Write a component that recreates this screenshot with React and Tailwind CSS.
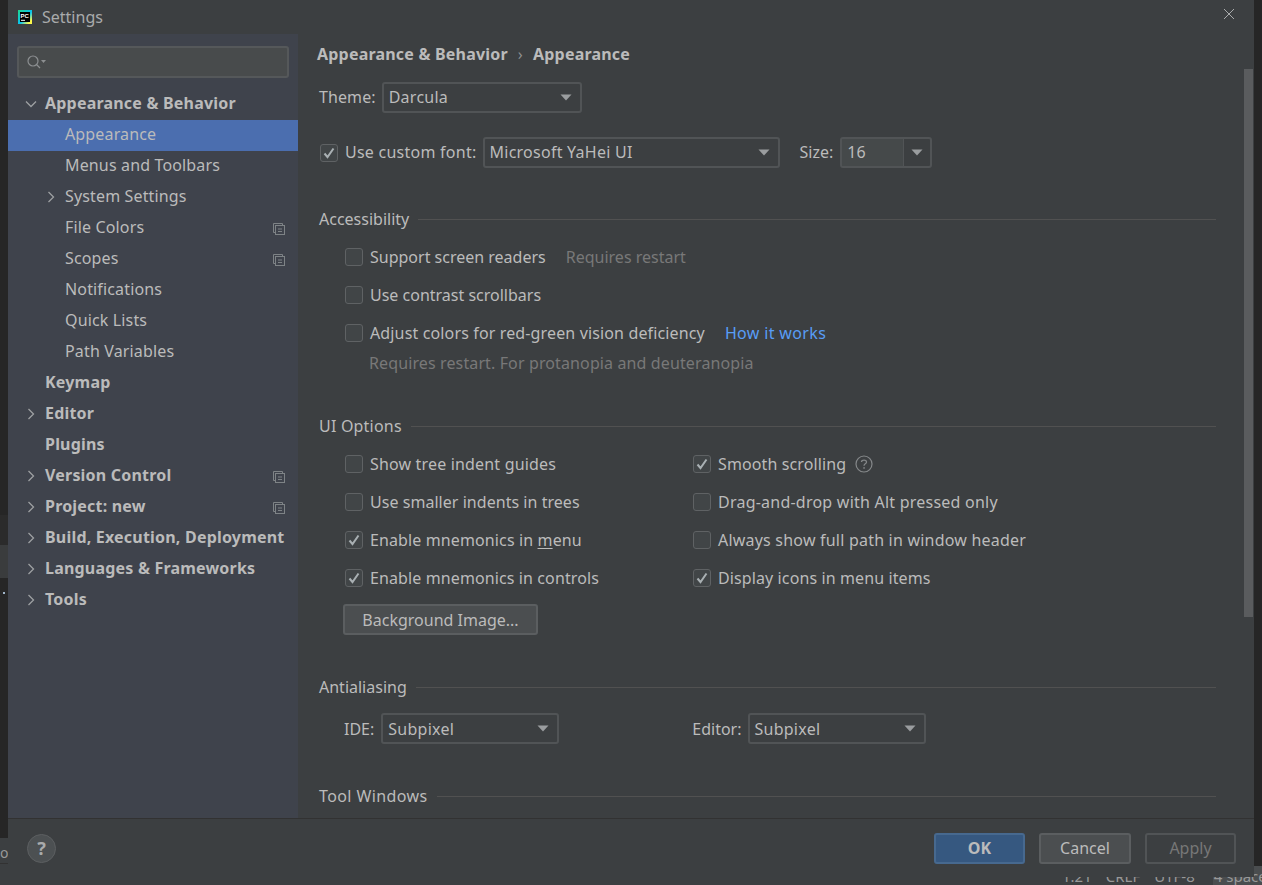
import React from "react";

const font = { fontFamily: '"Noto Sans", "Open Sans", sans-serif' };

function Chevron({ open }) {
  return (
    <svg width="12" height="12" viewBox="0 0 12 12" fill="none" stroke="#9da0a2" strokeWidth="1.3">
      {open ? <path d="M1 3.5 L6 8.5 L11 3.5" /> : <path d="M3.5 1 L8.5 6 L3.5 11" />}
    </svg>
  );
}

function CopyIcon() {
  return (
    <svg width="12" height="12" viewBox="0 0 12 12" fill="none" stroke="#7e8386" strokeWidth="1" className="ml-auto mr-[13px] shrink-0">
      <path d="M2.5 9.5 H0.5 V0.5 H9.5 V2.5" />
      <rect x="2.5" y="2.5" width="9" height="9" />
      <path d="M5 6 H9 M5 8.5 H9" />
    </svg>
  );
}

function Tree({ label, bold, indent, arrow, copy, selected }) {
  return (
    <div className={`flex h-[31px] items-center ${selected ? "bg-[#4b6eaf]" : ""}`}>
      <div className={`relative flex h-full items-center ${indent ? "pl-[57px]" : "pl-[37px]"}`}>
        {arrow && (
          <span className={`absolute top-[9px] ${indent ? "left-[37px]" : "left-[17px]"}`}>
            <Chevron open={arrow === "open"} />
          </span>
        )}
        <span className={`whitespace-nowrap pb-[3px] text-[16px] ${bold ? "font-bold tracking-[0.2px]" : "tracking-[0.15px]"} text-[#bbbbbb]`}>{label}</span>
      </div>
      {copy && <CopyIcon />}
    </div>
  );
}

function Check({ checked }) {
  return (
    <span className="flex h-[18px] w-[18px] shrink-0 items-center justify-center rounded-[3px] border border-[#5f6264] bg-[#414547]">
      {checked && (
        <svg width="12" height="12" viewBox="0 0 12 12" fill="none" stroke="#a9b0b3" strokeWidth="2">
          <path d="M1.5 6.5 L4.5 10 L10.5 1.5" />
        </svg>
      )}
    </span>
  );
}

function CheckRow({ label, checked, children, extra, track }) {
  return (
    <div className="flex h-[38px] items-center">
      <Check checked={checked} />
      <span className={`ml-[7px] whitespace-nowrap text-[16px] text-[#bbbbbb] ${track || ""}`}>{children || label}</span>
      {extra}
    </div>
  );
}

function Caret() {
  return (
    <svg width="12" height="7" viewBox="0 0 12 7" className="shrink-0">
      <path d="M0.5 0.5 H11.5 L6 6.5 Z" fill="#9a9d9f" />
    </svg>
  );
}

function Select({ value, className, centered }) {
  return (
    <div className={`flex h-[31px] items-center rounded-[3px] border-2 border-[#515456] pl-[5px] pr-[8px] text-[16px] text-[#bbbbbb] ${className}`}>
      <span className={`whitespace-nowrap tracking-[0.25px] ${centered ? "" : "pb-[2px]"}`}>{value}</span>
      <span className="ml-auto">
        <Caret />
      </span>
    </div>
  );
}

function Section({ title, className, track }) {
  return (
    <div className={`flex h-[24px] items-center ${className}`}>
      <span className={`whitespace-nowrap text-[16px] text-[#bbbbbb] ${track || ""}`}>{title}</span>
      <div className="ml-[9px] h-px flex-1 bg-[#515151]" />
    </div>
  );
}

function Button({ children, className }) {
  return (
    <div className={`flex h-[31px] items-center justify-center rounded-[3px] border-2 text-[16px] ${className}`}>{children}</div>
  );
}

export default function App() {
  return (
    <div style={font} className="relative h-[885px] w-[1262px] overflow-hidden bg-[#262626]">
      {/* IDE peeking out behind the dialog */}
      <div className="absolute left-0 top-[515px] h-[30px] w-[8px] bg-[#2b2b2b]" />
      <div className="absolute left-0 top-[545px] h-[33px] w-[8px] bg-[#3a3c3d]" />
      <div className="absolute left-[3px] top-[592px] h-[2px] w-[2px] bg-[#9fb4c8]" />
      <div className="absolute bottom-0 left-0 right-0 top-[838px] bg-[#3c3f41]" />
      <div className="absolute left-0 top-[843px] w-[8px] overflow-hidden border-b border-[#323232] text-[14px] leading-[20px] text-[#999999]">or</div>
      <div className="absolute left-[1254px] top-[838px] h-[39px] w-[8px] bg-[#262626]" />
      <div className="absolute left-[1062px] top-[866px] flex w-[200px] gap-[14px] overflow-hidden whitespace-nowrap text-[15px] leading-[20px] text-[#999999]">
        <span>1:21</span>
        <span>CRLF</span>
        <span>UTF-8</span>
        <span className="ml-[4px] bg-[#4a4d4f] pl-[1px]">4 spaces</span>
      </div>

      <div className="relative ml-[8px] flex h-[877px] w-[1246px] flex-col bg-[#3c3f41]">
        <div className="flex h-[34px] shrink-0 items-center pl-[10px]">
          <svg width="14" height="14" viewBox="0 0 14 14">
            <defs>
              <linearGradient id="pc" x1="0" y1="0" x2="1" y2="1">
                <stop offset="0" stopColor="#21d789" />
                <stop offset="0.55" stopColor="#07c3f2" />
                <stop offset="0.85" stopColor="#fcf84a" />
              </linearGradient>
            </defs>
            <rect width="14" height="14" fill="url(#pc)" />
            <rect x="2" y="2" width="10" height="10" fill="#000000" />
            <rect x="3" y="9.8" width="4" height="1" fill="#ffffff" />
            <text x="2.6" y="7.8" fontSize="6" fontWeight="700" fill="#ffffff" fontFamily="Liberation Sans, sans-serif">PC</text>
          </svg>
          <span className="ml-[10px] text-[16px] text-[#a9abac]">Settings</span>
          <svg width="12" height="12" viewBox="0 0 12 12" stroke="#a9abac" strokeWidth="1" className="absolute left-[1215px] top-[8px]">
            <path d="M1 1 L11 11 M11 1 L1 11" />
          </svg>
        </div>

        <div className="flex min-h-0 flex-1">
          <aside className="w-[290px] shrink-0 bg-[#3f434c]">
            <div className="mx-[9px] mt-[12px] flex h-[32px] items-center rounded-[3px] border-2 border-[#55585a] bg-[#484b4c] pl-[7px]">
              <svg width="20" height="16" viewBox="0 0 20 16" fill="none" stroke="#8c8f91" strokeWidth="1.2">
                <circle cx="7" cy="7" r="5" />
                <path d="M10.5 10.5 L14 14" />
                <path d="M15 6 H20 L17.5 9 Z" fill="#8c8f91" stroke="none" />
              </svg>
            </div>
            <div className="mt-[11px]">
              <Tree label="Appearance & Behavior" bold arrow="open" />
              <Tree label="Appearance" indent selected />
              <Tree label="Menus and Toolbars" indent />
              <Tree label="System Settings" indent arrow="closed" />
              <Tree label="File Colors" indent copy />
              <Tree label="Scopes" indent copy />
              <Tree label="Notifications" indent />
              <Tree label="Quick Lists" indent />
              <Tree label="Path Variables" indent />
              <Tree label="Keymap" bold />
              <Tree label="Editor" bold arrow="closed" />
              <Tree label="Plugins" bold />
              <Tree label="Version Control" bold arrow="closed" copy />
              <Tree label="Project: new" bold arrow="closed" copy />
              <Tree label="Build, Execution, Deployment" bold arrow="closed" />
              <Tree label="Languages & Frameworks" bold arrow="closed" />
              <Tree label="Tools" bold arrow="closed" />
            </div>
          </aside>

          <main className="relative min-w-0 flex-1 overflow-hidden pl-[21px] pr-[38px]">
            <div className="absolute right-[1px] top-[35px] h-[548px] w-[9px] bg-[#5a5c5e]" />

            <div className="-ml-[2px] flex h-[40px] items-center text-[16px] font-bold tracking-[0.2px] text-[#bbbbbb]">
              <span>Appearance &amp; Behavior</span>
              <span className="mx-[10px] font-normal text-[#8c8f91]">›</span>
              <span>Appearance</span>
            </div>

            <div className="mt-[8px] flex items-center">
              <span className="pb-[2px] text-[16px] tracking-[0.1px] text-[#bbbbbb]">Theme:</span>
              <Select value="Darcula" className="ml-[6px] w-[200px]" />
            </div>

            <div className="mt-[24px] flex items-center pl-[1px]">
              <Check checked />
              <span className="ml-[7px] pb-[2px] text-[16px] tracking-[0.25px] text-[#bbbbbb]">Use custom font:</span>
              <Select value="Microsoft YaHei UI" className="ml-[6px] w-[297px]" />
              <span className="ml-[20px] pb-[2px] text-[16px] text-[#bbbbbb]">Size:</span>
              <div className="ml-[7px] flex h-[31px] w-[92px] items-center rounded-[3px] border-2 border-[#515456]">
                <span className="flex h-full w-[61px] items-center bg-[#45494a] pb-[2px] pl-[5px] text-[16px] text-[#bbbbbb]">16</span>
                <span className="flex h-full flex-1 items-center justify-center border-l border-[#515456]">
                  <Caret />
                </span>
              </div>
            </div>

            <Section title="Accessibility" className="mt-[39px]" />
            <div className="mt-[7px] pl-[26px]">
              <CheckRow
                label="Support screen readers"
                extra={<span className="ml-[20px] whitespace-nowrap text-[16px] text-[#787878]">Requires restart</span>}
              />
              <CheckRow label="Use contrast scrollbars" />
              <CheckRow
                label="Adjust colors for red-green vision deficiency"
                track="tracking-[0.14px]"
                extra={<span className="ml-[20px] whitespace-nowrap text-[16px] tracking-[0.35px] text-[#589df6]">How it works</span>}
              />
              <div className="pl-[24px] text-[16px] leading-[22px] tracking-[0.12px] text-[#787878]">Requires restart. For protanopia and deuteranopia</div>
            </div>

            <Section title="UI Options" className="mt-[40px]" track="tracking-[0.2px]" />
            <div className="mt-[7px] grid grid-cols-[348px_1fr] pl-[26px]">
              <CheckRow label="Show tree indent guides" track="tracking-[0.17px]" />
              <CheckRow
                label="Smooth scrolling"
                checked
                track="tracking-[0.12px]"
                extra={
                  <svg width="18" height="18" viewBox="0 0 18 18" fill="none" className="ml-[9px]">
                    <circle cx="9" cy="9" r="8" stroke="#85888a" strokeWidth="1.2" />
                    <path d="M6.5 7 C6.5 4.5 11.5 4.5 11.5 7 C11.5 9 9 8.6 9 10.8" stroke="#85888a" strokeWidth="1.3" />
                    <rect x="8.3" y="12.2" width="1.5" height="1.5" fill="#85888a" />
                  </svg>
                }
              />
              <CheckRow label="Use smaller indents in trees" track="tracking-[0.04px]" />
              <CheckRow label="Drag-and-drop with Alt pressed only" track="tracking-[0.23px]" />
              <CheckRow checked track="tracking-[0.12px]">
                Enable mnemonics in <span className="underline underline-offset-2">m</span>enu
              </CheckRow>
              <CheckRow label="Always show full path in window header" track="tracking-[0.21px]" />
              <CheckRow label="Enable mnemonics in controls" checked track="tracking-[0.11px]" />
              <CheckRow label="Display icons in menu items" checked track="tracking-[0.11px]" />
            </div>
            <Button className="ml-[24px] mt-[7px] w-[195px] border-[#5b5e60] bg-[#4b4e50] text-[#bbbbbb]">Background Image...</Button>

            <Section title="Antialiasing" className="mt-[40px]" />
            <div className="mt-[14px] flex items-center pl-[25px]">
              <span className="text-[16px] text-[#bbbbbb]">IDE:</span>
              <Select value="Subpixel" centered className="ml-[7px] w-[178px]" />
              <span className="ml-[133px] text-[16px] text-[#bbbbbb]">Editor:</span>
              <Select value="Subpixel" centered className="ml-[6px] w-[178px]" />
            </div>

            <Section title="Tool Windows" className="mt-[40px]" track="tracking-[0.4px]" />
          </main>
        </div>

        <footer className="flex h-[59px] shrink-0 items-center border-t border-[#323232] pl-[19px] pr-[18px]">
          <span className="flex h-[29px] w-[29px] items-center justify-center rounded-full border border-[#5c5f61] bg-[#4c5052] text-[18px] font-bold text-[#a9abac]">?</span>
          <Button className="ml-auto w-[91px] border-[#47698f] bg-[#365880] font-bold text-[#bbbbbb]">OK</Button>
          <Button className="ml-[14px] w-[92px] border-[#5b5e60] bg-[#4b4e50] text-[#bbbbbb]">Cancel</Button>
          <Button className="ml-[14px] w-[91px] border-[#515456] text-[#777777]">Apply</Button>
        </footer>
      </div>
    </div>
  );
}
